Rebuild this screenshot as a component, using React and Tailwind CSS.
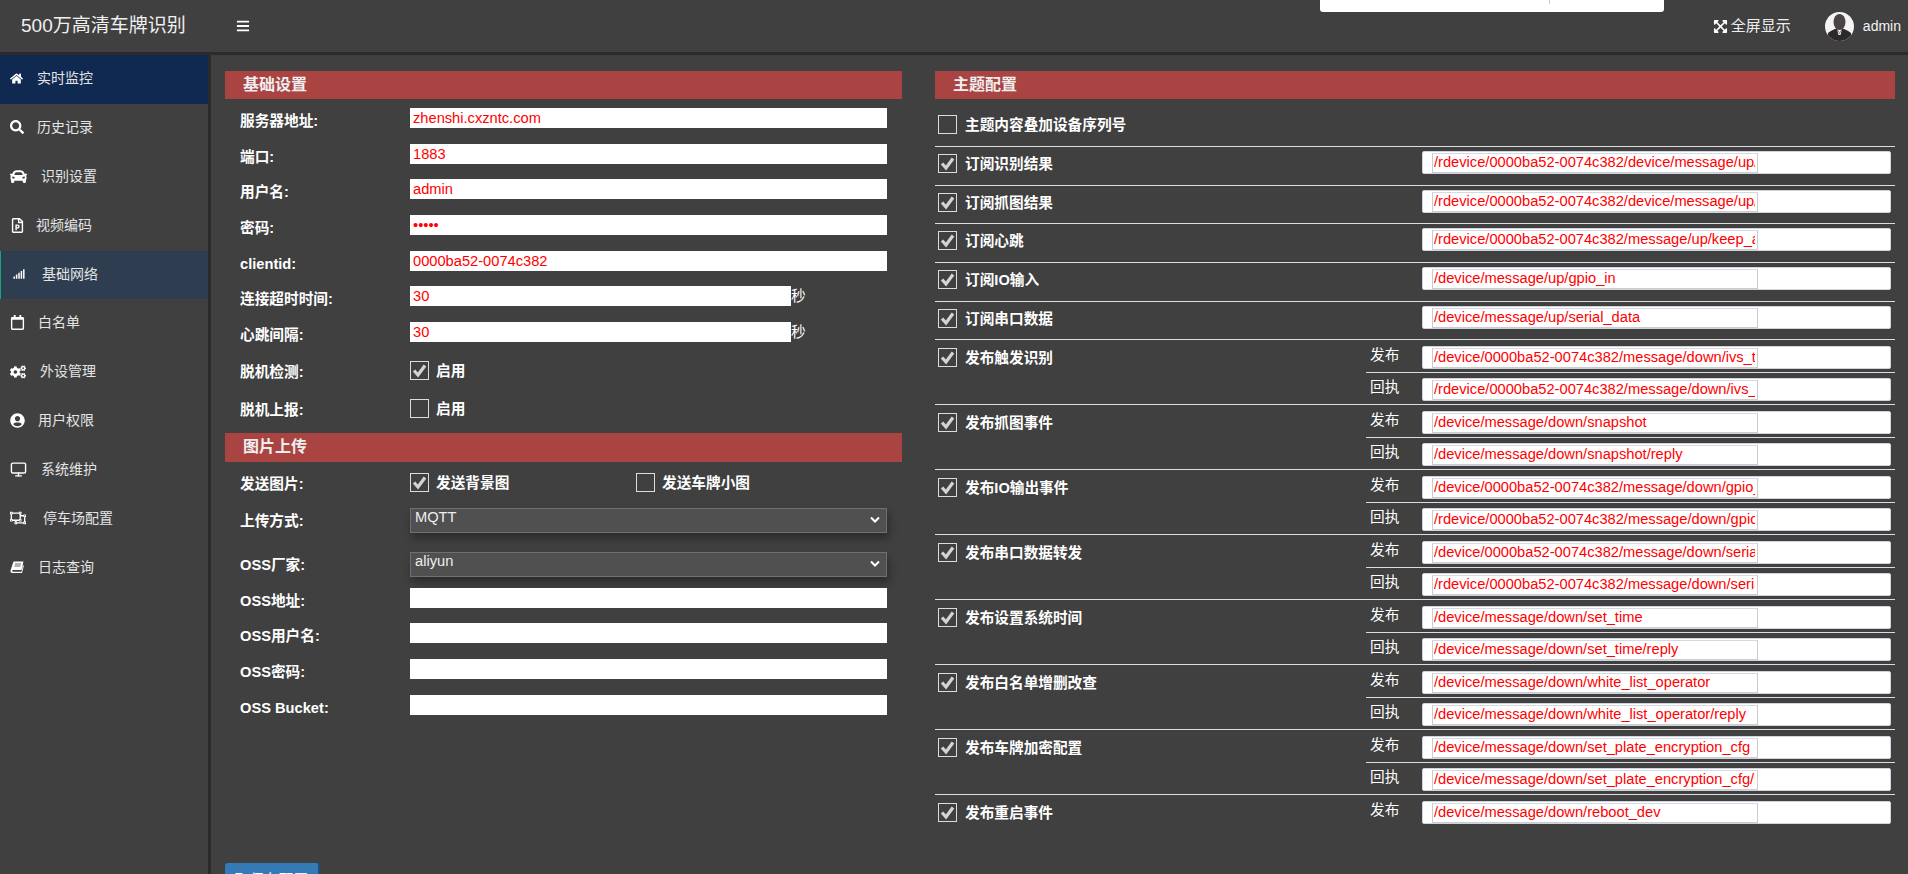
import React from "react";
import { FaHome, FaSearch, FaCar, FaRegFilePowerpoint, FaSignal, FaRegCalendar, FaCogs, FaUserCircle, FaRegObjectUngroup, FaExpandArrowsAlt, FaBars } from "react-icons/fa";
import { Monitor } from "lucide-react";

function SlantBook({ size, className }) {
  return (
    <svg width={size} height={size} viewBox="0 0 14 14" className={className}>
      <path d="M3.5 1.5 H13.5 L11.5 10 H3.5 Q2 10 2 11 Q2 11.8 3.5 11.8 H11.5 L13 5 L13.8 6 L12 13 H2.5 Q0.2 13 0.5 10.5 Z" fill="currentColor" />
      <path d="M5 4 H11 M4.5 6 H10.5" stroke="#404040" strokeWidth="0.8" />
    </svg>
  );
}

const nav = [
  { t: "实时监控", I: FaHome, s: 13, w: "w-[27px]", bg: "bg-[#0f2950]" },
  { t: "历史记录", I: FaSearch, s: 14, w: "w-[27px]" },
  { t: "识别设置", I: FaCar, s: 17, w: "w-[31px]" },
  { t: "视频编码", I: FaRegFilePowerpoint, s: 15, w: "w-[26px]" },
  { t: "基础网络", I: FaSignal, s: 12, w: "w-[32px] pl-[3px]", bg: "bg-[#2e3e50]", green: true },
  { t: "白名单", I: FaRegCalendar, s: 15, w: "w-[28px]" },
  { t: "外设管理", I: FaCogs, s: 16, w: "w-[30px]" },
  { t: "用户权限", I: FaUserCircle, s: 15, w: "w-[28px]" },
  { t: "系统维护", I: Monitor, s: 17, w: "w-[31px]" },
  { t: "停车场配置", I: FaRegObjectUngroup, s: 16, w: "w-[33px]" },
  { t: "日志查询", I: SlantBook, s: 14, w: "w-[28px]" },
];

function Check({ on, className = "" }) {
  return (
    <span className={"shrink-0 w-[19px] h-[19px] border border-[#dcdcdc] flex items-center justify-center " + className}>
      {on && (
        <svg width="15" height="15" viewBox="0 0 15 15">
          <path d="M2 7.5 L6 12 L13 2.5" fill="none" stroke="#d4d4d4" strokeWidth="3.2" />
        </svg>
      )}
    </span>
  );
}

function Bar({ children, h = "h-7" }) {
  return <div className={h + " bg-[#a94442] pl-[18px] flex items-center text-[16px] font-bold text-[#eeeeee]"}>{children}</div>;
}

function Label({ children }) {
  return <div className="w-[185px] shrink-0 pl-[15px] text-[14.67px] leading-5 font-bold text-white">{children}</div>;
}

function TextRow({ label, value, short }) {
  return (
    <div className="h-[35.67px] flex">
      <div className="pt-[3px]"><Label>{label}</Label></div>
      <div className={(short ? "w-[381px]" : "w-[477px]") + " h-5 bg-white text-[#ff0000] text-[14.67px] leading-5 pl-[3px] overflow-hidden whitespace-nowrap"}>{value}</div>
      {short && <span className="text-white text-[14.67px] leading-5">秒</span>}
    </div>
  );
}

function CheckRow({ label, h, pt, items }) {
  return (
    <div className={h + " flex " + pt}>
      <div className="pt-[1px]"><Label>{label}</Label></div>
      <div className="flex">
        {items.map((it, i) => (
          <div key={i} className={(items.length > 1 && i === 0 ? "w-[226px] " : "") + "flex items-start"}>
            <Check on={it.on} />
            <span className="ml-[7px] text-[14.67px] leading-5 font-bold text-white">{it.t}</span>
          </div>
        ))}
      </div>
    </div>
  );
}

function SelectRow({ label, value, h, sh }) {
  return (
    <div className={h + " flex"}>
      <div className="pt-[3px]"><Label>{label}</Label></div>
      <div className={sh + " w-[477px] bg-[#505050] border border-[#707070] shadow-[2px_5px_8px_rgba(0,0,0,0.35)] text-[#eeeeee] text-[14.67px] leading-[17px] pl-[4px] flex justify-between"}>
        <span>{value}</span>
        <svg className="mr-[6px] mt-[7px]" width="10" height="8" viewBox="0 0 10 8">
          <path d="M1 1.5 L5 5.5 L9 1.5" fill="none" stroke="#ffffff" strokeWidth="2" />
        </svg>
      </div>
    </div>
  );
}

function Topic({ value }) {
  return (
    <div className="w-[469px] h-[23px] bg-white border border-[#cfd3e0] rounded-[2px] pl-[9px] pt-[1px]">
      <div className="w-[326px] h-5 border border-[#cccccc] border-t-[#d8d8e0] pl-[1px] pr-[2px]">
        <div className="h-[18px] text-[#ff0000] text-[14.67px] leading-[17px] overflow-hidden whitespace-nowrap">{value}</div>
      </div>
    </div>
  );
}

function SingleRow({ label, value }) {
  return (
    <div className="h-[38.7px] border-b border-[#dddddd] flex pl-[3px]">
      <Check on className="mt-[7px]" />
      <span className="ml-[8px] mt-[7px] text-[14.67px] leading-5 font-bold text-white w-[457px]">{label}</span>
      <div className="mt-[4px]"><Topic value={value} /></div>
    </div>
  );
}

function DualRow({ label, pub, reply, last }) {
  return (
    <div className={(last ? "h-[33px] " : "border-b border-[#dddddd] h-[65px] ") + "flex"}>
      <div className="w-[431px] flex pl-[3px] pt-[8px]">
        <Check on />
        <span className="ml-[8px] text-[14.67px] leading-5 font-bold text-white">{label}</span>
      </div>
      <div className="flex-1">
        <div className={(reply ? "border-b border-[#dddddd] " : "") + "h-[33px] flex pl-[4px] pt-[6px]"}>
          <span className="w-[52px] mt-[-1px] text-white text-[14.67px] leading-5">发布</span>
          <Topic value={pub} />
        </div>
        {reply && (
          <div className="h-[31px] flex pl-[4px] pt-[5px]">
            <span className="w-[52px] mt-[-1px] text-white text-[14.67px] leading-5">回执</span>
            <Topic value={reply} />
          </div>
        )}
      </div>
    </div>
  );
}

export default function App() {
  const id = "0000ba52-0074c382";
  return (
    <div className="h-[874px] w-full overflow-hidden bg-[#404040] relative flex flex-col [font-family:'Liberation_Sans','Noto_Sans_CJK_SC',sans-serif]">
      <div className="absolute left-[1320px] top-0 w-[344px] h-3 bg-white rounded-b-[3px]">
        <div className="absolute left-[229px] top-0 w-px h-[4px] bg-[#cccccc]" />
      </div>
      <header className="h-[55px] shrink-0 border-b-[3px] border-[#2b2b2b] flex items-center">
        <div className="w-[208px] pl-[21px] text-[19px] text-[#f0f0f0] whitespace-nowrap">500万高清车牌识别</div>
        <FaBars className="ml-[28px] text-white" size={14} />
        <div className="ml-auto flex items-center text-white text-[14px]">
          <FaExpandArrowsAlt size={15} />
          <span className="ml-[3px] text-[15px] text-[#eeeeee]">全屏显示</span>
          <svg className="ml-[34px]" width="29" height="29" viewBox="0 0 29 29">
            <defs><clipPath id="av"><circle cx="14.5" cy="14.5" r="14.5" /></clipPath></defs>
            <g clipPath="url(#av)">
              <rect width="29" height="29" fill="#f4f4f4" />
              <ellipse cx="14.5" cy="10" rx="6" ry="8" fill="#4a4444" />
              <path d="M2 29 L3 21 Q8 17 12 16.5 L14.5 21 L17 16.5 Q21 17 26 21 L27 29 Z" fill="#2e2a2a" />
              <path d="M12 17 L14.5 22 L17 17 L15.5 23 L13.5 23 Z" fill="#f4f4f4" />
            </g>
          </svg>
          <span className="ml-[9px] mr-[7px] text-[#f4f4f4]">admin</span>
        </div>
      </header>
      <div className="flex flex-1 min-h-0">
        <aside className="w-[211px] shrink-0 border-r-[3px] border-[#2b2b2b]">
          {nav.map(({ t, I, s, w, bg, green }) => (
            <div key={t} className={(bg || "") + (green ? " border-l border-[#1aa37a] pl-[9px]" : " pl-[10px]") + " h-[48.9px] pb-[2px] flex items-center text-[14px] text-[#e4e4e4]"}>
              <span className={w + " shrink-0 flex items-center"}><I size={s} className="text-white" /></span>
              <span>{t}</span>
            </div>
          ))}
        </aside>
        <main className="flex-1 min-w-0 pt-4 pl-[14px] pr-[13px]">
          <div className="grid grid-cols-[677px_960px] gap-x-[33px]">
            <section>
              <Bar>基础设置</Bar>
              <div className="h-[9px]" />
              <TextRow label="服务器地址:" value="zhenshi.cxzntc.com" />
              <TextRow label="端口:" value="1883" />
              <TextRow label="用户名:" value="admin" />
              <TextRow label="密码:" value="•••••" />
              <TextRow label="clientid:" value={id} />
              <TextRow label="连接超时时间:" value="30" short />
              <TextRow label="心跳间隔:" value="30" short />
              <CheckRow label="脱机检测:" h="h-[38px]" pt="pt-[3px]" items={[{ on: true, t: "启用" }]} />
              <CheckRow label="脱机上报:" h="h-[37px]" pt="pt-[3px]" items={[{ on: false, t: "启用" }]} />
              <Bar h="h-[29px]">图片上传</Bar>
              <CheckRow label="发送图片:" h="h-[46px]" pt="pt-[11px]" items={[{ on: true, t: "发送背景图" }, { on: false, t: "发送车牌小图" }]} />
              <SelectRow label="上传方式:" value="MQTT" h="h-[44px]" sh="h-[25px]" />
              <SelectRow label="OSS厂家:" value="aliyun" h="h-[36px]" sh="h-[25px]" />
              <TextRow label="OSS地址:" value="" />
              <TextRow label="OSS用户名:" value="" />
              <TextRow label="OSS密码:" value="" />
              <TextRow label="OSS Bucket:" value="" />
            </section>
            <section>
              <Bar>主题配置</Bar>
              <div className="h-[48px] border-b border-[#dddddd] flex pl-[3px] pt-[16px]">
                <Check />
                <span className="ml-[8px] text-[14.67px] leading-5 font-bold text-white">主题内容叠加设备序列号</span>
              </div>
              <SingleRow label="订阅识别结果" value={`/rdevice/${id}/device/message/up/ivs_result`} />
              <SingleRow label="订阅抓图结果" value={`/rdevice/${id}/device/message/up/snapshot`} />
              <SingleRow label="订阅心跳" value={`/rdevice/${id}/message/up/keep_alive`} />
              <SingleRow label="订阅IO输入" value="/device/message/up/gpio_in" />
              <SingleRow label="订阅串口数据" value="/device/message/up/serial_data" />
              <DualRow label="发布触发识别" pub={`/device/${id}/message/down/ivs_trigger`} reply={`/rdevice/${id}/message/down/ivs_trigger/reply`} />
              <DualRow label="发布抓图事件" pub="/device/message/down/snapshot" reply="/device/message/down/snapshot/reply" />
              <DualRow label="发布IO输出事件" pub={`/device/${id}/message/down/gpio_out`} reply={`/rdevice/${id}/message/down/gpio_out/reply`} />
              <DualRow label="发布串口数据转发" pub={`/device/${id}/message/down/serial_data`} reply={`/rdevice/${id}/message/down/serial_data/reply`} />
              <DualRow label="发布设置系统时间" pub="/device/message/down/set_time" reply="/device/message/down/set_time/reply" />
              <DualRow label="发布白名单增删改查" pub="/device/message/down/white_list_operator" reply="/device/message/down/white_list_operator/reply" />
              <DualRow label="发布车牌加密配置" pub="/device/message/down/set_plate_encryption_cfg" reply="/device/message/down/set_plate_encryption_cfg/reply" />
              <DualRow label="发布重启事件" pub="/device/message/down/reboot_dev" last />
            </section>
          </div>
          <button className="mt-[35px] block w-[95px] h-[34px] bg-[#337ab7] border-r-2 border-[#1f4f7f] rounded-[3px] text-white text-[14.67px]">取保存配置</button>
        </main>
      </div>
    </div>
  );
}
